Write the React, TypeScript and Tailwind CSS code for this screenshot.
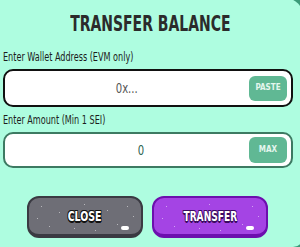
import React from "react";

const font = { fontFamily: '"DejaVu Sans Condensed", "Liberation Sans", sans-serif' };

function Dots() {
  const pts = [
    [12, 8], [30, 14], [55, 6], [78, 12], [98, 8], [20, 28], [45, 30], [88, 26], [104, 18], [66, 32], [8, 20],
  ];
  return (
    <>
      {pts.map(([x, y], i) => (
        <span
          key={i}
          className="absolute w-[1px] h-[1px] bg-white/50"
          style={{ left: x, top: y }}
        />
      ))}
      <span className="absolute right-[12px] bottom-[4px] w-[8px] h-[4px] rounded-full bg-white" />
    </>
  );
}

export default function App() {
  return (
    <div className="w-[300px] h-[247px] bg-[#3a9a78] overflow-hidden" style={font}>
      <div className="w-[303px] h-[249px] -mt-[2px] bg-[#aefde0] rounded-tr-[18px] rounded-br-[10px] flex flex-col pl-[3px] pt-[2px]">
        <div className="h-[45px] flex items-center justify-center pr-[6px] pt-[4px]">
          <h1 className="inline-block text-[21px] font-bold text-[#2b2b2b] leading-none scale-x-[0.74]">TRANSFER BALANCE</h1>
        </div>
        <div className="h-[24px] flex items-center">
          <span className="inline-block origin-left text-[12px] text-[#1c1c1c] leading-none scale-x-[0.75]">Enter Wallet Address (EVM only)</span>
        </div>
        <div className="w-[290px] h-[38px] rounded-[10px] border-2 border-[#111] bg-white flex items-center pr-[4px]">
          <div className="flex-1 text-center">
            <span className="inline-block text-[14px] text-[#555] scale-x-[0.8]">0x...</span>
          </div>
          <button className="w-[38px] h-[25px] rounded-[6px] bg-[#60b894] text-[#e4f6ee] text-[8px] font-bold">PASTE</button>
        </div>
        <div className="h-[25px] flex items-center">
          <span className="inline-block origin-left text-[12px] text-[#1c1c1c] leading-none scale-x-[0.75]">Enter Amount (Min 1 SEI)</span>
        </div>
        <div className="w-[290px] h-[36px] rounded-[10px] border-2 border-[#3d7a62] bg-white flex items-center pr-[4px]">
          <div className="flex-1 text-center pl-[28px]">
            <span className="inline-block text-[14px] text-[#2b5f50] scale-x-[0.8]">0</span>
          </div>
          <button className="w-[38px] h-[26px] rounded-[6px] bg-[#60b894] text-[#e4f6ee] text-[8px] font-bold">MAX</button>
        </div>
        <div className="flex gap-[9px] mt-[28px] ml-[24px]">
          <button className="relative w-[116px] h-[42px] rounded-[12px] bg-[#6e6e76] border-2 border-[#3a3a42] border-b-[4px] text-white font-bold">
            <Dots />
            <span className="inline-block text-[14px] scale-x-[0.75] [text-shadow:_-1px_-1px_0_#111,_1px_-1px_0_#111,_-1px_1px_0_#111,_1px_1px_0_#111,_0_2px_0_#111]">CLOSE</span>
          </button>
          <button className="relative w-[116px] h-[42px] rounded-[12px] bg-[#a444e4] border-2 border-[#6c0fae] border-b-[4px] text-white font-bold">
            <Dots />
            <span className="inline-block text-[14px] scale-x-[0.72] [text-shadow:_-1px_-1px_0_#3a0a60,_1px_-1px_0_#3a0a60,_-1px_1px_0_#3a0a60,_1px_1px_0_#3a0a60,_0_2px_0_#3a0a60]">TRANSFER</span>
          </button>
        </div>
      </div>
    </div>
  );
}
